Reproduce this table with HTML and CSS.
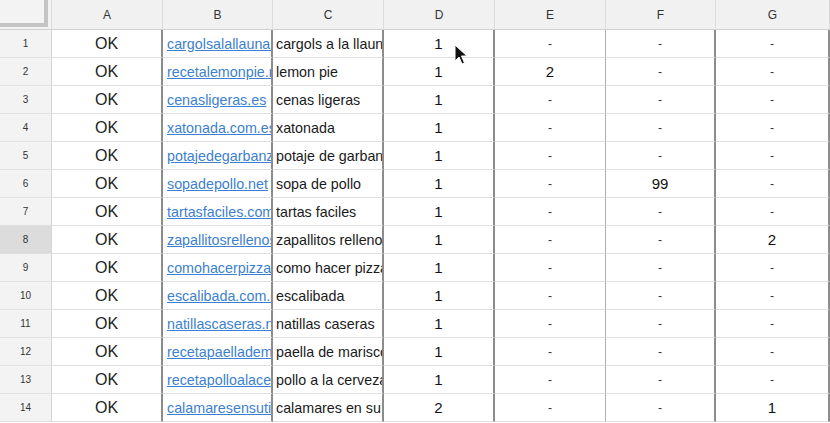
FILE: index.html
```html
<!DOCTYPE html>
<html>
<head>
<meta charset="utf-8">
<link rel="stylesheet" href="styles.css">
</head>
<body>
<div class="sheet">
<table class="grid">
<colgroup>
<col class="c-rh"><col class="c-a"><col class="c-b"><col class="c-c"><col class="c-d"><col class="c-e"><col class="c-f"><col class="c-g">
</colgroup>
<thead>
<tr>
<th class="corner"><div class="corner-box"></div></th>
<th>A</th><th>B</th><th>C</th><th>D</th><th>E</th><th>F</th><th>G</th>
</tr>
</thead>
<tbody>
<tr><td class="rh">1</td><td class="ok">OK</td><td class="url"><a>cargolsalallauna.com</a></td><td class="txt">cargols a la llauna</td><td class="num">1</td><td class="dash">-</td><td class="dash">-</td><td class="dash">-</td></tr>
<tr><td class="rh">2</td><td class="ok">OK</td><td class="url"><a>recetalemonpie.net</a></td><td class="txt">lemon pie</td><td class="num">1</td><td class="num">2</td><td class="dash">-</td><td class="dash">-</td></tr>
<tr><td class="rh">3</td><td class="ok">OK</td><td class="url"><a>cenasligeras.es</a></td><td class="txt">cenas ligeras</td><td class="num">1</td><td class="dash">-</td><td class="dash">-</td><td class="dash">-</td></tr>
<tr><td class="rh">4</td><td class="ok">OK</td><td class="url"><a>xatonada.com.es</a></td><td class="txt">xatonada</td><td class="num">1</td><td class="dash">-</td><td class="dash">-</td><td class="dash">-</td></tr>
<tr><td class="rh">5</td><td class="ok">OK</td><td class="url"><a>potajedegarbanzos.com</a></td><td class="txt">potaje de garbanzos</td><td class="num">1</td><td class="dash">-</td><td class="dash">-</td><td class="dash">-</td></tr>
<tr><td class="rh">6</td><td class="ok">OK</td><td class="url"><a>sopadepollo.net</a></td><td class="txt">sopa de pollo</td><td class="num">1</td><td class="dash">-</td><td class="num">99</td><td class="dash">-</td></tr>
<tr><td class="rh">7</td><td class="ok">OK</td><td class="url"><a>tartasfaciles.com</a></td><td class="txt">tartas faciles</td><td class="num">1</td><td class="dash">-</td><td class="dash">-</td><td class="dash">-</td></tr>
<tr><td class="rh sel">8</td><td class="ok">OK</td><td class="url"><a>zapallitosrellenos.com</a></td><td class="txt">zapallitos rellenos</td><td class="num">1</td><td class="dash">-</td><td class="dash">-</td><td class="num">2</td></tr>
<tr><td class="rh">9</td><td class="ok">OK</td><td class="url"><a>comohacerpizza.com</a></td><td class="txt">como hacer pizza</td><td class="num">1</td><td class="dash">-</td><td class="dash">-</td><td class="dash">-</td></tr>
<tr><td class="rh">10</td><td class="ok">OK</td><td class="url"><a>escalibada.com.es</a></td><td class="txt">escalibada</td><td class="num">1</td><td class="dash">-</td><td class="dash">-</td><td class="dash">-</td></tr>
<tr><td class="rh">11</td><td class="ok">OK</td><td class="url"><a>natillascaseras.net</a></td><td class="txt">natillas caseras</td><td class="num">1</td><td class="dash">-</td><td class="dash">-</td><td class="dash">-</td></tr>
<tr><td class="rh">12</td><td class="ok">OK</td><td class="url"><a>recetapaellademarisco.com</a></td><td class="txt">paella de marisco</td><td class="num">1</td><td class="dash">-</td><td class="dash">-</td><td class="dash">-</td></tr>
<tr><td class="rh">13</td><td class="ok">OK</td><td class="url"><a>recetapolloalacerveza.com</a></td><td class="txt">pollo a la cerveza</td><td class="num">1</td><td class="dash">-</td><td class="dash">-</td><td class="dash">-</td></tr>
<tr><td class="rh">14</td><td class="ok">OK</td><td class="url"><a>calamaresensutinta.com</a></td><td class="txt">calamares en su tinta</td><td class="num">2</td><td class="dash">-</td><td class="dash">-</td><td class="num">1</td></tr>
</tbody>
</table>
<svg class="cursor" width="14" height="22" viewBox="0 0 14 22"><path d="M1 1 L1 17 L5 13 L8 20 L10.5 19 L7.5 12 L13 12 Z" fill="#111" stroke="#fff" stroke-width="1"/></svg>
</div>
</body>
</html>
```
FILE: styles.css
```css
html, body {
  margin: 0;
  padding: 0;
  background: #ffffff;
}
body {
  font-family: "Liberation Sans", Arial, sans-serif;
  color: #222;
}
.sheet {
  position: relative;
  width: 830px;
  height: 423px;
  overflow: hidden;
}
.grid {
  border-collapse: separate;
  border-spacing: 0;
  table-layout: fixed;
  width: 830px;
}
.c-rh { width: 52px; }
.c-a { width: 111px; }
.c-b { width: 110px; }
.c-c { width: 111px; }
.c-d { width: 111px; }
.c-e { width: 111px; }
.c-f { width: 110px; }
.c-g { width: 114px; }

thead th {
  height: 29px;
  padding: 0;
  background: #f1f1f1;
  border-bottom: 1px solid #d2d2d2;
  border-right: 1px solid #dcdcdc;
  font-weight: normal;
  font-size: 12px;
  color: #333;
  text-align: center;
  vertical-align: middle;
}
th.corner {
  background: #f3f3f3;
  vertical-align: top;
  text-align: left;
}
.corner-box {
  width: 44px;
  height: 23px;
  border-right: 4px solid #c4c4c4;
  border-bottom: 4px solid #c4c4c4;
}
tbody td {
  height: 27px;
  padding: 0;
  border-bottom: 1px solid #e0e0e0;
  border-right: 2px solid #8c8c8c;
  white-space: nowrap;
  overflow: hidden;
  vertical-align: middle;
  background: #fff;
}
tbody td.rh {
  background: #f3f3f3;
  border-right: 1px solid #d6d6d6;
  font-size: 10px;
  color: #333;
  text-align: center;
}
tbody td.rh.sel {
  background: #dcdcdc;
}
td.ok {
  text-align: center;
  font-size: 16px;
  color: #222;
}
td.url {
  font-size: 14.3px;
  padding-left: 4px;
}
td.url a {
  color: #3d7fd0;
  text-decoration: underline;
}
td.txt {
  font-size: 14.3px;
  padding-left: 3px;
  color: #1a1a1a;
}
td.num {
  text-align: center;
  font-size: 15px;
  color: #111;
}
td.dash {
  text-align: center;
  font-size: 12px;
  color: #333;
}
tbody td:nth-child(6) {
  border-right: 1px solid #b0b0b0;
}
.cursor {
  position: absolute;
  left: 454px;
  top: 44px;
}
```
